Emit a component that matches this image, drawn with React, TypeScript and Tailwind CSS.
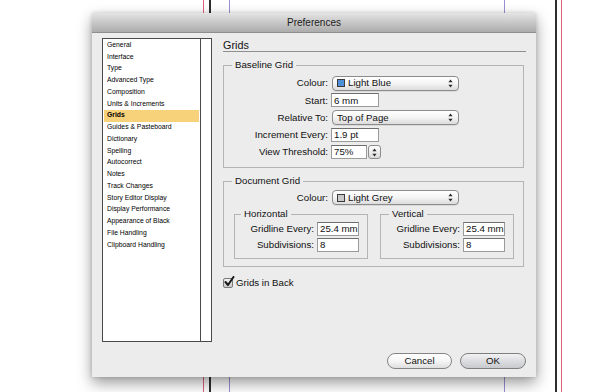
import React from "react";

const font = { fontFamily: '"Liberation Sans", Arial, sans-serif' };

const categories = [
  "General",
  "Interface",
  "Type",
  "Advanced Type",
  "Composition",
  "Units & Increments",
  "Grids",
  "Guides & Pasteboard",
  "Dictionary",
  "Spelling",
  "Autocorrect",
  "Notes",
  "Track Changes",
  "Story Editor Display",
  "Display Performance",
  "Appearance of Black",
  "File Handling",
  "Clipboard Handling",
];

function Stepper() {
  return (
    <svg width="5" height="9" viewBox="0 0 5 9" className="shrink-0">
      <path d="M2.5 0.5 L4.6 3.3 L0.4 3.3 Z" fill="#2a2a2a" />
      <path d="M2.5 8.5 L4.6 5.7 L0.4 5.7 Z" fill="#2a2a2a" />
    </svg>
  );
}

function Popup({ swatch, text }: { swatch?: string; text: string }) {
  return (
    <div className="w-[127px] h-[15px] rounded-[4px] border border-[#8c8c8c] bg-gradient-to-b from-white via-[#f4f4f4] to-[#dcdcdc] flex items-center pl-[4px] pr-[5px] shadow-[0_1px_0_rgba(0,0,0,0.08)]">
      {swatch && (
        <span
          className={`w-[8px] h-[8px] border border-[#3a3a3a] mr-[3px] shrink-0 ${swatch}`}
        />
      )}
      <span className="flex-1 text-[9.7px] text-[#111] leading-none whitespace-nowrap">{text}</span>
      <Stepper />
    </div>
  );
}

function Field({ value, w = "w-[48px]" }: { value: string; w?: string }) {
  return (
    <div
      className={`${w} h-[14px] bg-white border border-[#9a9a9a] border-t-[#6e6e6e] flex items-center pl-[2px] text-[9.7px] text-[#111] leading-none whitespace-nowrap overflow-hidden`}
    >
      {value}
    </div>
  );
}

function Row({
  label,
  labelW,
  h = "h-[17.25px]",
  children,
}: {
  label: string;
  labelW: string;
  h?: string;
  children: React.ReactNode;
}) {
  return (
    <div className={`flex items-center ${h}`}>
      <span className={`${labelW} shrink-0 text-right text-[9.7px] text-[#111] leading-none whitespace-nowrap`}>
        {label}
      </span>
      <div className="ml-[3px]">{children}</div>
    </div>
  );
}

function Group({
  title,
  titleLeft,
  className,
  children,
}: {
  title: string;
  titleLeft: string;
  className: string;
  children: React.ReactNode;
}) {
  return (
    <div className={`relative border border-[#b4b4b4] ${className}`}>
      <span
        className={`absolute -top-[7px] ${titleLeft} px-[3px] bg-[#ececec] text-[9.7px] leading-[12px] text-[#111] whitespace-nowrap`}
      >
        {title}
      </span>
      {children}
    </div>
  );
}

export default function App() {
  return (
    <div className="relative w-[615px] h-[392px] bg-white overflow-hidden" style={font}>
      {/* page guides behind the dialog */}
      <div className="absolute top-0 bottom-0 left-[203px] w-px bg-[#e0607a]" />
      <div className="absolute top-0 bottom-0 left-[209px] w-[1.5px] bg-[#2e2e2e]" />
      <div className="absolute top-0 bottom-0 left-[229px] w-px bg-[#9c8fd4]" />
      <div className="absolute top-0 bottom-0 left-[504px] w-px bg-[#9c8fd4]" />
      <div className="absolute top-0 bottom-0 left-[555px] w-[1.5px] bg-[#2e2e2e]" />
      <div className="absolute top-0 bottom-0 left-[561px] w-px bg-[#e0607a]" />

      {/* dialog window */}
      <div className="absolute left-[92px] top-[13px] w-[444px] h-[364px] bg-[#ececec] flex flex-col shadow-[0_6px_14px_rgba(0,0,0,0.4),0_0_4px_rgba(0,0,0,0.15)]">
        <div className="h-[20px] shrink-0 bg-gradient-to-b from-[#e4e4e4] to-[#acacac] border-b border-[#8e8e8e] flex items-center justify-center text-[10px] text-[#1a1a1a]">
          Preferences
        </div>

        <div className="flex pt-[5px] pl-[10px]">
          {/* category list */}
          <div className="w-[110px] h-[304px] border border-[#4a4a4a] bg-white flex">
            <div className="w-[98px] border-r border-[#4a4a4a] pt-[0.5px]">
              {categories.map((c) => (
                <div
                  key={c}
                  className={`h-[11.75px] flex items-center pl-[3px] mx-px text-[6.8px] leading-none text-black whitespace-nowrap ${
                    c === "Grids" ? "bg-[#f8d17b] font-bold" : ""
                  }`}
                >
                  {c}
                </div>
              ))}
            </div>
            <div className="flex-1 bg-white" />
          </div>

          {/* grids panel */}
          <div className="ml-[11px] w-[303px]">
            <div className="h-[14px] border-b border-[#8f8f8f] text-[10.8px] leading-[12px] text-[#111] pt-[1px]">
              Grids
            </div>

            <Group
              title="Baseline Grid"
              titleLeft="left-[8px]"
              className="mt-[13px] w-[301px] pt-[8.5px] pb-[6px]"
            >
              <Row label="Colour:" labelW="w-[104px]">
                <div className="ml-px">
                  <Popup swatch="bg-[#4d8fd8]" text="Light Blue" />
                </div>
              </Row>
              <Row label="Start:" labelW="w-[104px]">
                <Field value="6 mm" />
              </Row>
              <Row label="Relative To:" labelW="w-[104px]">
                <div className="ml-px">
                  <Popup text="Top of Page" />
                </div>
              </Row>
              <Row label="Increment Every:" labelW="w-[104px]">
                <Field value="1.9 pt" />
              </Row>
              <Row label="View Threshold:" labelW="w-[104px]">
                <div className="flex items-center">
                  <Field value="75%" w="w-[36px]" />
                  <div className="ml-[1px] w-[13px] h-[14px] rounded-[3px] border border-[#8c8c8c] bg-gradient-to-b from-white to-[#dadada] flex items-center justify-center">
                    <Stepper />
                  </div>
                </div>
              </Row>
            </Group>

            <Group
              title="Document Grid"
              titleLeft="left-[8px]"
              className="mt-[13px] w-[301px] pt-[7.5px] pb-[7px] pl-[10px]"
            >
              <Row label="Colour:" labelW="w-[94px]" h="h-[17px]">
                <div className="ml-px">
                  <Popup swatch="bg-[#c9c9c9]" text="Light Grey" />
                </div>
              </Row>

              <div className="flex gap-[12px] mt-[7.5px]">
                <Group
                  title="Horizontal"
                  titleLeft="left-[6px]"
                  className="w-[134px] pt-[6px] pb-[5px]"
                >
                  <Row label="Gridline Every:" labelW="w-[79px]" h="h-[16px]">
                    <Field value="25.4 mm" w="w-[42px]" />
                  </Row>
                  <Row label="Subdivisions:" labelW="w-[79px]" h="h-[16px]">
                    <Field value="8" w="w-[42px]" />
                  </Row>
                </Group>
                <Group
                  title="Vertical"
                  titleLeft="left-[8px]"
                  className="w-[134px] pt-[6px] pb-[5px]"
                >
                  <Row label="Gridline Every:" labelW="w-[79px]" h="h-[16px]">
                    <Field value="25.4 mm" w="w-[42px]" />
                  </Row>
                  <Row label="Subdivisions:" labelW="w-[79px]" h="h-[16px]">
                    <Field value="8" w="w-[42px]" />
                  </Row>
                </Group>
              </div>
            </Group>

            <div className="mt-[11px] flex items-center">
              <div className="relative w-[10px] h-[10px] rounded-[2px] border border-[#7a7a7a] bg-gradient-to-b from-[#f4f4f4] to-[#c9c9c9]">
                <svg
                  width="11"
                  height="11"
                  viewBox="0 0 11 11"
                  className="absolute -top-[3px] left-[0px]"
                >
                  <path
                    d="M1.5 6 L4 9 L9.5 1"
                    fill="none"
                    stroke="#1a1a1a"
                    strokeWidth="2"
                    strokeLinecap="round"
                    strokeLinejoin="round"
                  />
                </svg>
              </div>
              <span className="ml-[3px] text-[9.7px] leading-none text-[#111]">Grids in Back</span>
            </div>
          </div>
        </div>

        {/* buttons */}
        <div className="flex justify-end gap-[8px] pr-[10px] mt-[11px]">
          <button className="w-[65px] h-[16px] rounded-full border border-[#858585] bg-gradient-to-b from-white via-[#f6f6f6] to-[#dedede] text-[9.7px] leading-none text-[#111]">
            Cancel
          </button>
          <button className="w-[66px] h-[16px] rounded-full border border-[#7f7f7f] bg-gradient-to-b from-[#f2f2f4] via-[#dcdde0] to-[#c8c9cd] text-[9.7px] leading-none text-[#111]">
            OK
          </button>
        </div>
      </div>
    </div>
  );
}
